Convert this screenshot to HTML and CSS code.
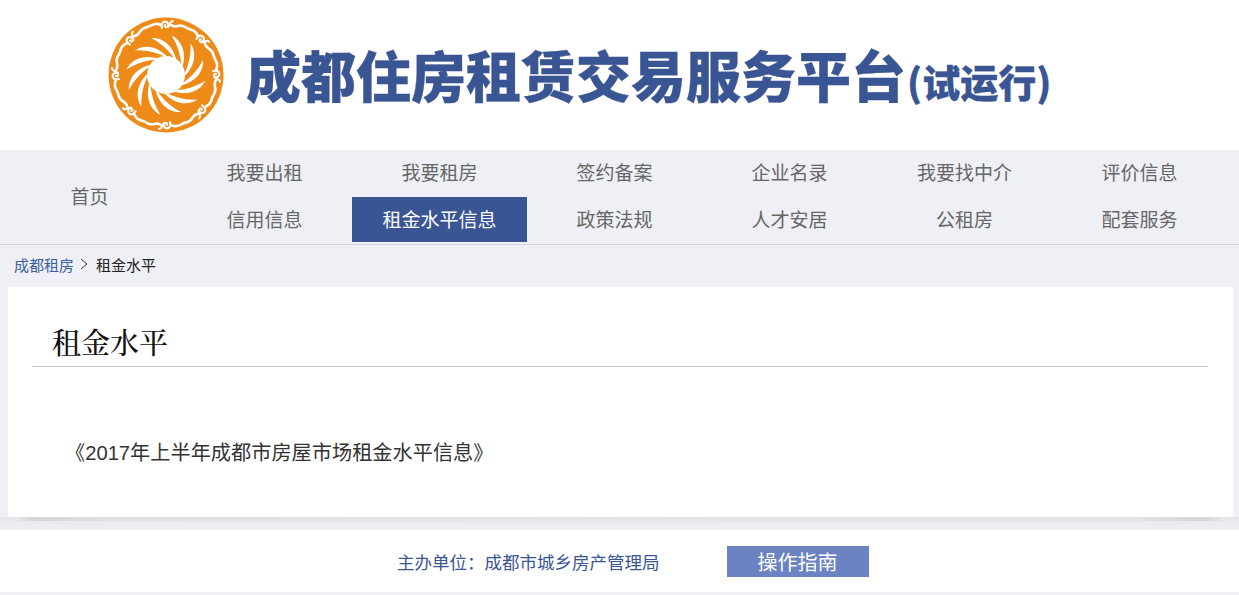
FILE: index.html
```html
<!DOCTYPE html>
<html lang="zh-CN">
<head>
<meta charset="utf-8">
<title>成都住房租赁交易服务平台</title>
<link rel="stylesheet" href="styles.css">
</head>
<body>
<header class="site-header">
  <svg class="logo" viewBox="-58 -58 116 116" aria-hidden="true">
    <defs>
      <path id="blade" d="M-15,-37 C-4,-38 8,-30 11,-12 C5,-23 -5,-32 -15,-37Z"/>
      <g id="seg">
        <path d="M-4,-47 C-6,-54 1,-55 2,-51 C3,-47 -2,-47 -1,-50 M2,-48 C5,-53 4,-54 7,-54" fill="none" stroke="#fff" stroke-width="2.1" stroke-linecap="round"/>
        <path d="M5,-50 C10,-46 13,-52 19,-48 C25,-44 28,-47 32,-39" fill="none" stroke="#fff" stroke-width="2.6" stroke-linecap="round"/>
      </g>
    </defs>
    <circle r="57.5" fill="#ee8a17"/>
    <g fill="#fff">
      <circle r="19"/>
      <use href="#blade"/>
      <use href="#blade" transform="rotate(30)"/>
      <use href="#blade" transform="rotate(60)"/>
      <use href="#blade" transform="rotate(90)"/>
      <use href="#blade" transform="rotate(120)"/>
      <use href="#blade" transform="rotate(150)"/>
      <use href="#blade" transform="rotate(180)"/>
      <use href="#blade" transform="rotate(210)"/>
      <use href="#blade" transform="rotate(240)"/>
      <use href="#blade" transform="rotate(270)"/>
      <use href="#blade" transform="rotate(300)"/>
      <use href="#blade" transform="rotate(330)"/>
    </g>
    <use href="#seg"/>
    <use href="#seg" transform="rotate(45)"/>
    <use href="#seg" transform="rotate(90)"/>
    <use href="#seg" transform="rotate(135)"/>
    <use href="#seg" transform="rotate(180)"/>
    <use href="#seg" transform="rotate(225)"/>
    <use href="#seg" transform="rotate(270)"/>
    <use href="#seg" transform="rotate(315)"/>
  </svg>
  <h1 class="site-title">成都住房租赁交易服务平台<small class="site-title-note">(试运行)</small></h1>
</header>

<nav class="main-nav">
  <a class="nav-home" href="#">首页</a>
  <ul class="nav-grid">
    <li class="nav-item"><a href="#">我要出租</a></li>
    <li class="nav-item"><a href="#">我要租房</a></li>
    <li class="nav-item"><a href="#">签约备案</a></li>
    <li class="nav-item"><a href="#">企业名录</a></li>
    <li class="nav-item"><a href="#">我要找中介</a></li>
    <li class="nav-item"><a href="#">评价信息</a></li>
    <li class="nav-item"><a href="#">信用信息</a></li>
    <li class="nav-item is-active"><a href="#">租金水平信息</a></li>
    <li class="nav-item"><a href="#">政策法规</a></li>
    <li class="nav-item"><a href="#">人才安居</a></li>
    <li class="nav-item"><a href="#">公租房</a></li>
    <li class="nav-item"><a href="#">配套服务</a></li>
  </ul>
</nav>

<div class="breadcrumb">
  <a href="#">成都租房</a>
  <svg class="crumb-sep" viewBox="0 0 8 12" aria-hidden="true"><path d="M1,1 L7,6 L1,11" fill="none" stroke="#333" stroke-width="1"/></svg>
  <span class="crumb-current">租金水平</span>
</div>

<main class="card">
  <h2 class="card-title">租金水平</h2>
  <p class="card-link"><a href="#">《2017年上半年成都市房屋市场租金水平信息》</a></p>
</main>
<div class="card-shadow"></div>

<footer class="site-footer">
  <span class="footer-org">主办单位：成都市城乡房产管理局</span>
  <a class="guide-btn" href="#">操作指南</a>
</footer>
</body>
</html>
```
FILE: styles.css
```css
* { box-sizing: border-box; }
html, body { margin: 0; padding: 0; }
body {
  background: #eef0f5;
  font-family: "Noto Sans CJK SC", "Liberation Sans", sans-serif;
  height: 595px;
  overflow: hidden;
}
a { color: inherit; text-decoration: none; }
ul { list-style: none; margin: 0; padding: 0; }

.site-header {
  height: 150px;
  background: #fff;
  display: flex;
  align-items: center;
  padding-left: 108px;
  gap: 22px;
}
.logo { width: 116px; height: 116px; flex: none; filter: blur(0.5px); }
.site-title {
  margin: 0;
  padding-bottom: 4px;
  font-size: 55px;
  font-weight: 900;
  line-height: 1;
  color: #3a5593;
  white-space: nowrap;
  -webkit-text-stroke: 0.3px #3a5593;
}
.site-title-note { font-size: 38px; margin-left: 1px; }

.main-nav {
  height: 95px;
  display: flex;
  border-bottom: 1px solid #d3d5da;
  color: #666;
  font-size: 19px;
}
.nav-home {
  width: 177px;
  display: flex;
  align-items: center;
  justify-content: center;
  padding: 0 0 4px 2px;
}
.nav-grid {
  display: grid;
  grid-template-columns: repeat(6, 175px);
  grid-auto-rows: 45px;
  row-gap: 2px;
}
.nav-item a {
  display: flex;
  height: 100%;
  align-items: center;
  justify-content: center;
  padding-bottom: 2px;
}
.is-active { background: #3a5593; color: #fff; }

.breadcrumb {
  height: 42px;
  padding: 0 0 4px 14px;
  display: flex;
  align-items: center;
  gap: 6px;
  font-size: 15px;
  color: #3a5f9c;
}
.crumb-sep { width: 8px; height: 12px; }
.crumb-current { color: #222; margin-left: 2px; }

.card {
  margin: 0 6px 0 8px;
  height: 230px;
  background: #fff;
  padding: 0 25px 0 24px;
}
.card-title {
  margin: 0;
  height: 80px;
  padding: 37px 0 0 20px;
  border-bottom: 1px solid #ccc;
  font-family: "Liberation Serif", "Noto Serif CJK SC", "Noto Sans CJK SC", serif;
  font-size: 29px;
  line-height: 40px;
  font-weight: 500;
  color: #111;
}
.card-link {
  margin: 0;
  padding: 68px 0 0 33px;
  font-family: "Liberation Sans", "Noto Sans CJK SC", sans-serif;
  font-size: 20.2px;
  line-height: 36px;
  color: #333;
}
.card-shadow {
  height: 13px;
  background:
    linear-gradient(to right, transparent 14px, #d3d6d9 34px, #dfe2e5 110px, #e2e5e8 calc(100% - 110px), #d3d6d9 calc(100% - 34px), transparent calc(100% - 14px)) top / 100% 4px no-repeat,
    linear-gradient(#e4e7ea, #eef0f5);
}

.site-footer {
  height: 62px;
  background: #fff;
  display: flex;
  align-items: center;
  padding-left: 397px;
  gap: 67px;
}
.footer-org { font-size: 17.5px; color: #3a5593; }
.guide-btn {
  width: 142px;
  height: 31px;
  background: #6b83c2;
  color: #fff;
  font-size: 20px;
  display: flex;
  align-items: center;
  justify-content: center;
}
```
